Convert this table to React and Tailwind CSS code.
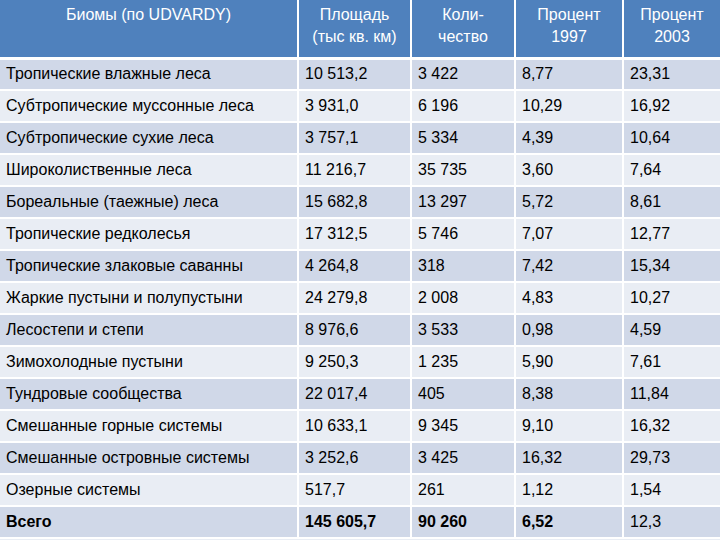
import React from 'react'

const rows = [
    ['Тропические влажные леса', '10 513,2', '3 422', '8,77', '23,31'],
    ['Субтропические муссонные леса', '3 931,0', '6 196', '10,29', '16,92'],
    ['Субтропические сухие леса', '3 757,1', '5 334', '4,39', '10,64'],
    ['Широколиственные леса', '11 216,7', '35 735', '3,60', '7,64'],
    ['Бореальные (таежные) леса', '15 682,8', '13 297', '5,72', '8,61'],
    ['Тропические редколесья', '17 312,5', '5 746', '7,07', '12,77'],
    ['Тропические злаковые саванны', '4 264,8', '318', '7,42', '15,34'],
    ['Жаркие пустыни и полупустыни', '24 279,8', '2 008', '4,83', '10,27'],
    ['Лесостепи и степи', '8 976,6', '3 533', '0,98', '4,59'],
    ['Зимохолодные пустыни', '9 250,3', '1 235', '5,90', '7,61'],
    ['Тундровые сообщества', '22 017,4', '405', '8,38', '11,84'],
    ['Смешанные горные системы', '10 633,1', '9 345', '9,10', '16,32'],
    ['Смешанные островные системы', '3 252,6', '3 425', '16,32', '29,73'],
    ['Озерные системы', '517,7', '261', '1,12', '1,54'],
]

const App = () => {
    return (
        <div className="h-[540px] w-[720px] overflow-hidden bg-[#e9edf4] font-['Liberation_Sans',sans-serif] text-[16px] text-black">
            <table className="w-[720px] table-fixed border-collapse">
                <colgroup>
                    <col className="w-[298px]" />
                    <col className="w-[113px]" />
                    <col className="w-[104px]" />
                    <col className="w-[108px]" />
                    <col className="w-[97px]" />
                </colgroup>
                <thead>
                    <tr className="h-[58px] bg-[#4f81bd] text-white">
                        <th className="border-r-2 border-b-[3px] border-white pt-[4px] align-top font-normal leading-[22px]">Биомы (по UDVARDY)</th>
                        <th className="border-x-2 border-b-[3px] border-white pt-[4px] align-top font-normal leading-[22px]">Площадь<br />(тыс кв. км)</th>
                        <th className="border-x-2 border-b-[3px] border-white pt-[4px] align-top font-normal leading-[22px]">Коли-<br />чество</th>
                        <th className="border-x-2 border-b-[3px] border-white pt-[4px] align-top font-normal leading-[22px]">Процент<br />1997</th>
                        <th className="border-l-2 border-b-[3px] border-white pt-[4px] align-top font-normal leading-[22px]">Процент<br />2003</th>
                    </tr>
                </thead>
                <tbody>
                    {rows.map((r, i) => (
                        <tr key={i} className={i % 2 === 0 ? 'h-[32px] bg-[#d0d8e8]' : 'h-[32px] bg-[#e9edf4]'}>
                            {r.map((c, j) => (
                                <td key={j} className="border-2 border-t-0 border-white px-[6px] py-0 first:border-l-0 last:border-r-0">{c}</td>
                            ))}
                        </tr>
                    ))}
                    <tr className="h-[32px] bg-[#d0d8e8] font-bold">
                        <td className="border-2 border-t-0 border-l-0 border-white px-[6px]">Всего</td>
                        <td className="border-2 border-t-0 border-white px-[6px]">145 605,7</td>
                        <td className="border-2 border-t-0 border-white px-[6px]">90 260</td>
                        <td className="border-2 border-t-0 border-white px-[6px]">6,52</td>
                        <td className="border-2 border-t-0 border-r-0 border-white px-[6px] font-normal">12,3</td>
                    </tr>
                </tbody>
            </table>
        </div>
    )
}

export default App
